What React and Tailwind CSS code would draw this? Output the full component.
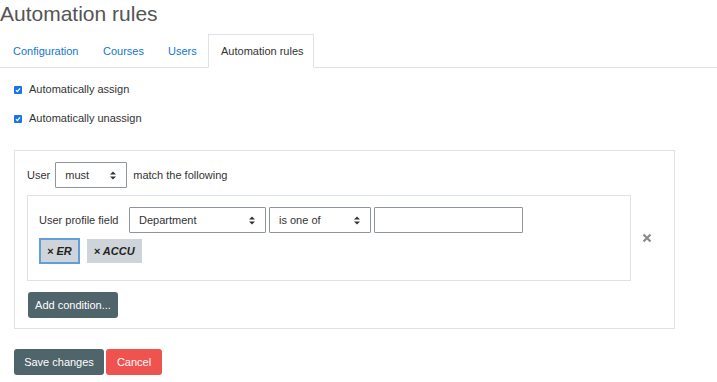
import React from "react";

function Arrows() {
  return (
    <svg width="6" height="9" viewBox="0 0 6 9" className="shrink-0">
      <path d="M0 3.5 L3 0.5 L6 3.5 Z" fill="#333" />
      <path d="M0 5.5 L3 8.5 L6 5.5 Z" fill="#333" />
    </svg>
  );
}

function Select({ w, label }) {
  return (
    <div
      className={`${w} h-[26px] border border-[#8f959e] rounded-[1px] flex items-center justify-between pl-[9px] pr-[10px] bg-white text-[#333]`}
    >
      <span>{label}</span>
      <Arrows />
    </div>
  );
}

function Check({ label }) {
  return (
    <div className="flex items-center h-[14px] pl-[14px]">
      <div className="w-[8px] h-[8px] rounded-[1px] bg-[#1a73e8] flex items-center justify-center mt-[2px]">
        <svg width="6" height="6" viewBox="0 0 6 6">
          <path d="M1 3.2 L2.4 4.6 L5 1.4" stroke="white" strokeWidth="1.3" fill="none" />
        </svg>
      </div>
      <span className="ml-[7px] text-[#333]">{label}</span>
    </div>
  );
}

export default function App() {
  return (
    <div className="w-[717px] h-[382px] bg-white overflow-hidden font-['Liberation_Sans',Arial,sans-serif] text-[11px] leading-[14px] text-[#333]">
      <h1 className="text-[21px] leading-[25px] text-[#555] pt-[1px] font-normal">Automation rules</h1>

      <div className="mt-[8px] flex border-b border-[#dee2e6]">
        <div className="w-[90px] h-[34px] -mb-px pl-[12px] border border-transparent flex items-center text-[#1177d1]">Configuration</div>
        <div className="w-[65px] h-[34px] -mb-px pl-[12px] border border-transparent flex items-center text-[#1177d1]">Courses</div>
        <div className="w-[53px] h-[34px] -mb-px pl-[12px] border border-transparent flex items-center text-[#1177d1]">Users</div>
        <div className="w-[106px] h-[34px] -mb-px pl-[12px] border border-[#dee2e6] border-b-white bg-white flex items-center text-[#333] whitespace-nowrap">Automation rules</div>
      </div>

      <div className="mt-[14px]">
        <Check label="Automatically assign" />
      </div>
      <div className="mt-[15px]">
        <Check label="Automatically unassign" />
      </div>

      <div className="mt-[25px] ml-[14px] w-[661px] border border-[#dee2e6] px-[12px] pt-[11px] pb-[10px]">
        <div className="flex items-center">
          <span>User</span>
          <div className="ml-[5px]">
            <Select w="w-[72px]" label="must" />
          </div>
          <span className="ml-[6px]">match the following</span>
        </div>

        <div className="mt-[7px] flex">
          <div className="w-[604px] border border-[#dee2e6] px-[11px] pt-[11px] pb-[16px]">
            <div className="flex items-center">
              <span className="w-[90px]">User profile field</span>
              <Select w="w-[137px]" label="Department" />
              <div className="ml-[3px]">
                <Select w="w-[102px]" label="is one of" />
              </div>
              <div className="ml-[3px] w-[149px] h-[26px] border border-[#8f959e] rounded-[1px] bg-white" />
            </div>
            <div className="mt-[5px] flex items-center">
              <div className="h-[26px] px-[6px] border-2 border-[#5f9fdb] bg-[#ced4da] flex items-center font-bold italic text-[#222]">
                × ER
              </div>
              <div className="ml-[7px] h-[24px] px-[7px] bg-[#ced4da] flex items-center font-bold italic text-[#222]">
                × ACCU
              </div>
            </div>
          </div>
          <div className="flex-1 flex items-center justify-center">
            <svg width="10" height="10" viewBox="0 0 10 10">
              <path d="M1.5 1.5 L8.5 8.5 M8.5 1.5 L1.5 8.5" stroke="#8a8a8a" strokeWidth="2.2" />
            </svg>
          </div>
        </div>

        <div className="mt-[11px] ml-px w-[90px] h-[26px] rounded-[3px] bg-[#50646b] text-white flex items-center justify-center">
          Add condition...
        </div>
      </div>

      <div className="mt-[20px] ml-[14px] flex gap-[2px]">
        <div className="w-[90px] h-[26px] rounded-[3px] bg-[#50646b] text-white flex items-center justify-center">Save changes</div>
        <div className="w-[56px] h-[26px] rounded-[3px] bg-[#ef5350] text-white flex items-center justify-center">Cancel</div>
      </div>
    </div>
  );
}
